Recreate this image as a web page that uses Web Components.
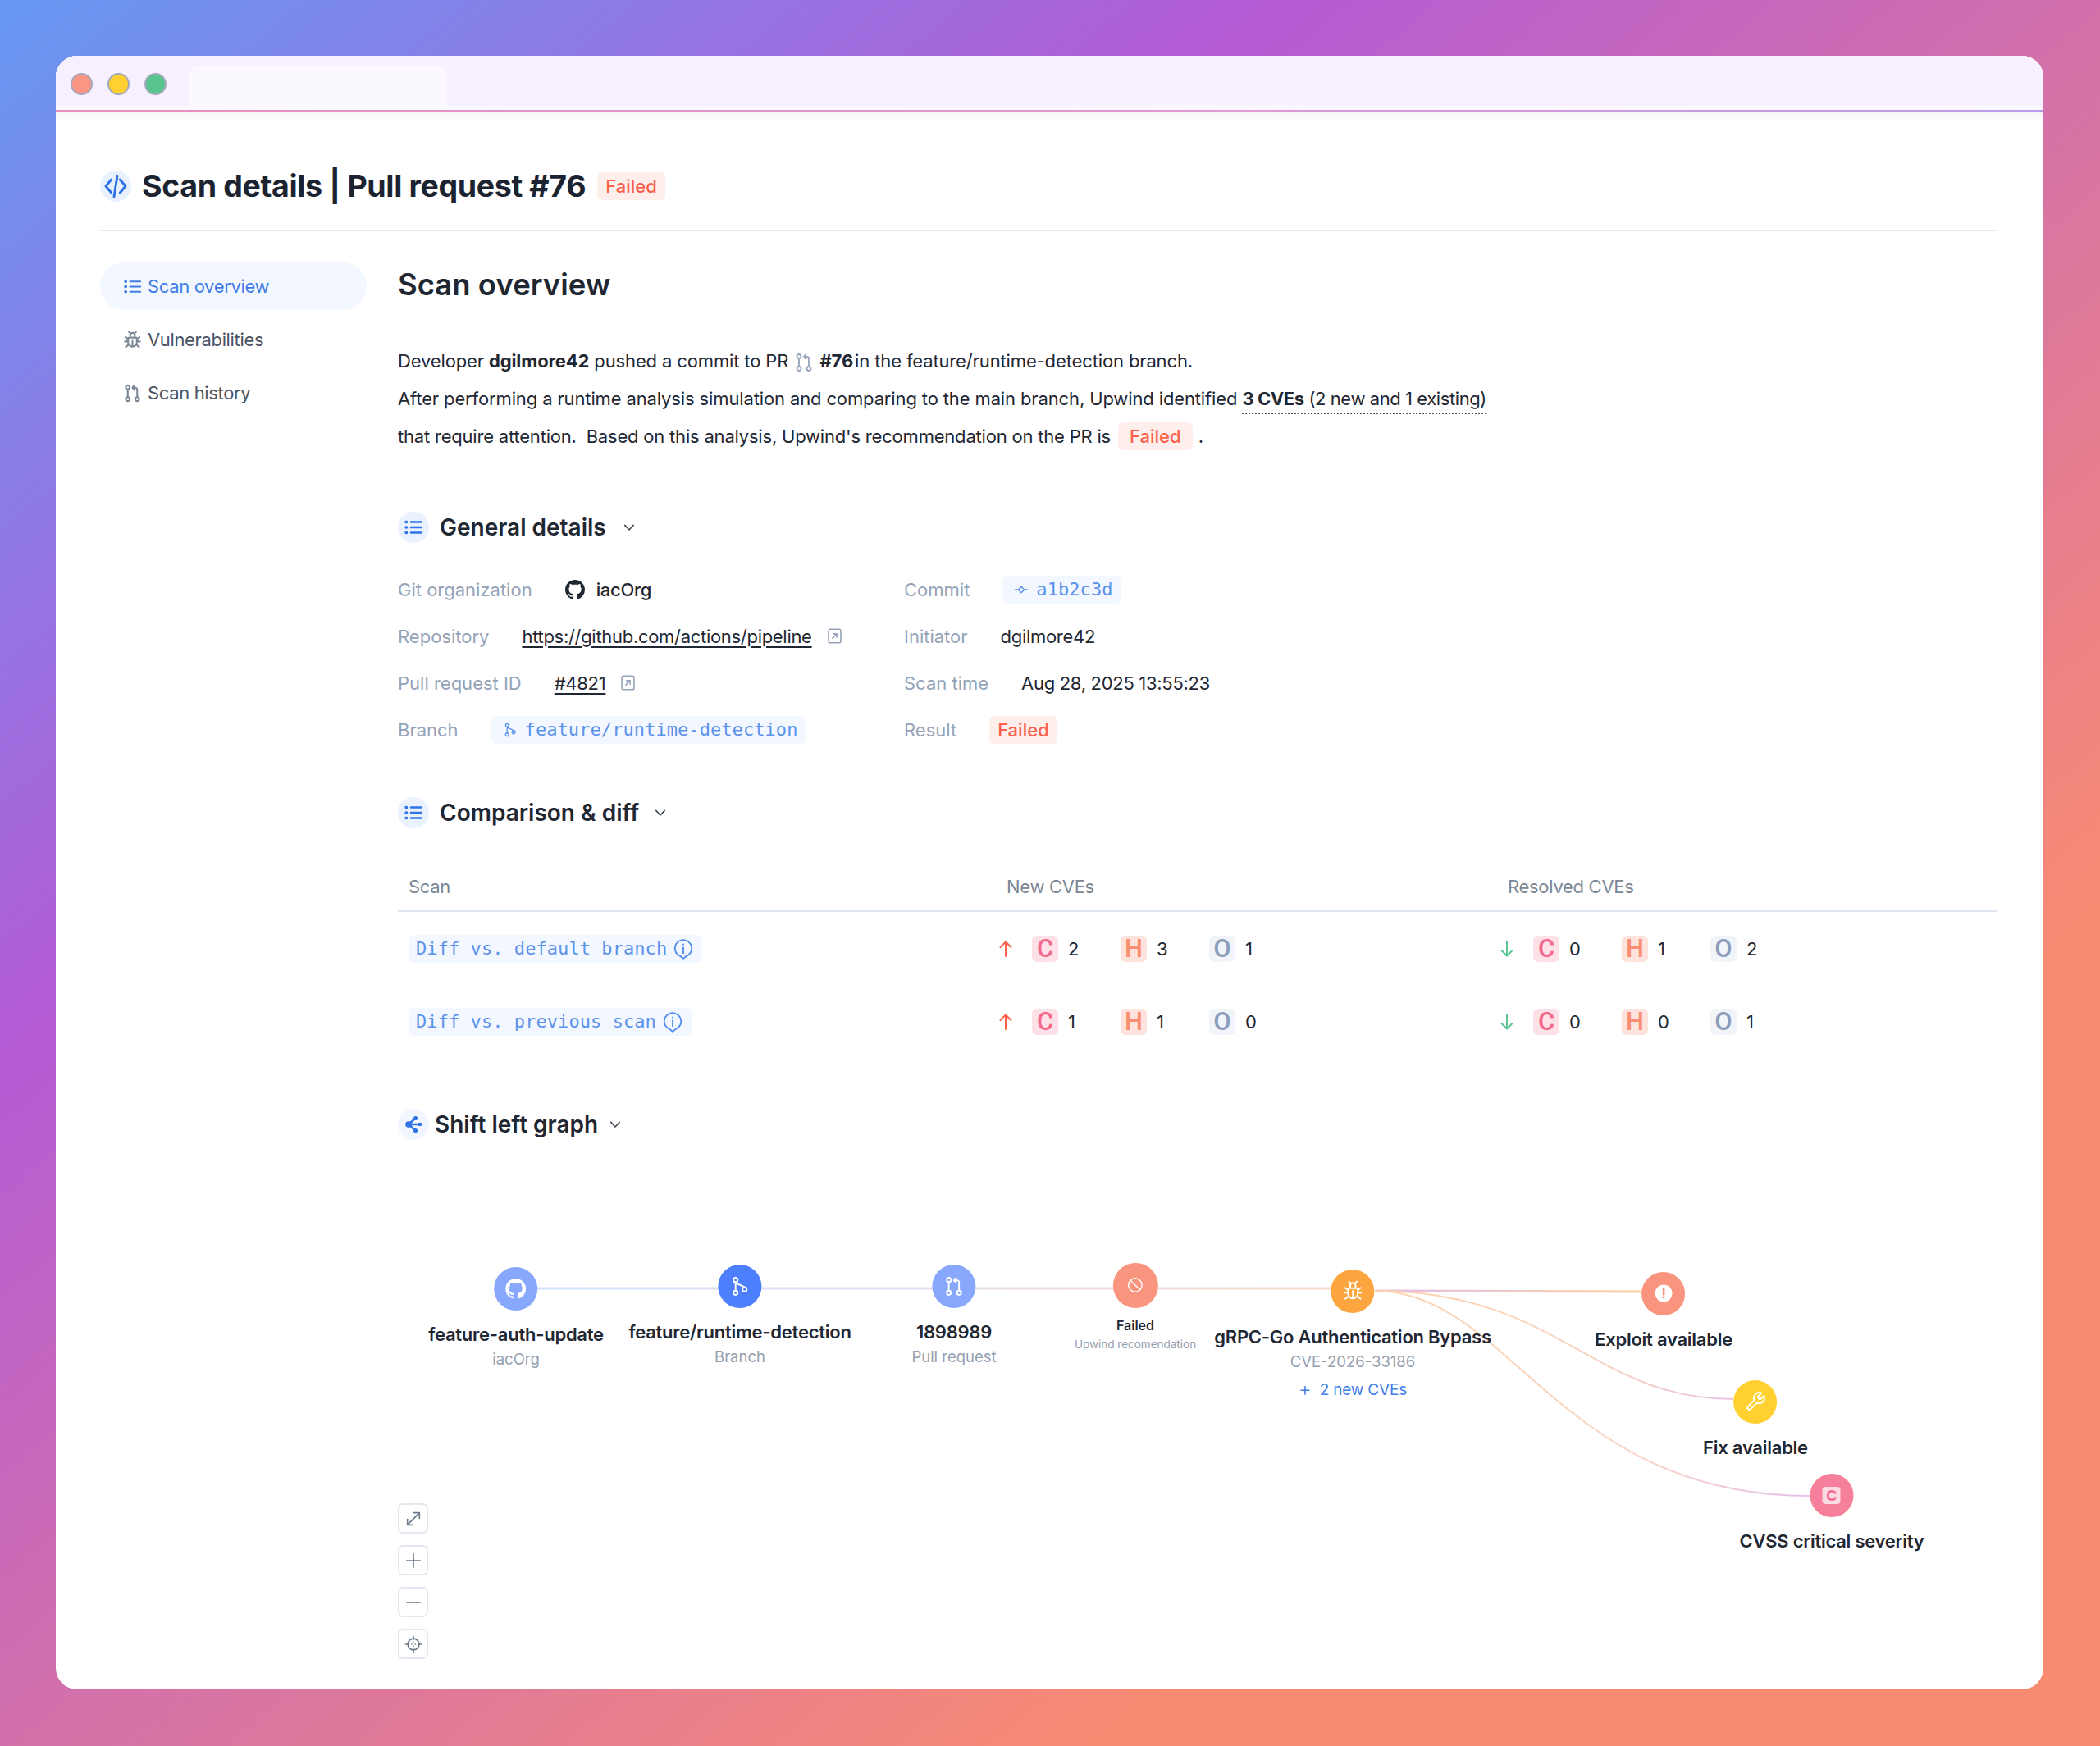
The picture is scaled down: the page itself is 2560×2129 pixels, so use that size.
<!DOCTYPE html>
<html lang="en">
<head>
<meta charset="utf-8">
<title>Scan details</title>
<style>
  html, body { margin: 0; height: 2129px; overflow: hidden; }
  body {
    font-family: Inter, "Liberation Sans", sans-serif;
    font-size: 22px;
    color: #1f2733;
    background: linear-gradient(to bottom right, #6699f2 0%, #b45bd6 30%, #f98b73 76%, #f98b73 100%);
    padding: 68px 69px 69px 68px;
    box-sizing: border-box;
  }
  b { font-weight: 700; }
</style>
</head>
<body>
<browser-window>
  <page-header>Scan details | Pull request #76</page-header>
  <div style="display:flex;gap:38px;padding:38px 57px 0 54px">
    <side-nav>
      <nav-item icon="list" active>Scan overview</nav-item>
      <nav-item icon="bug">Vulnerabilities</nav-item>
      <nav-item icon="pr">Scan history</nav-item>
    </side-nav>
    <main-panel></main-panel>
  </div>
</browser-window>

<script>
// icons, all on a 24 box unless the entry says otherwise
const ICONS = {
  code: '<path d="M8 6 3 12l5 6M16 6l5 6-5 6M13.500 2.500l-3 19"/>',
  list: '<path d="M9 5.500h13M9 12h13M9 18.500h13" /><path d="M3 5.500h.6M3 12h.6M3 18.500h.6" stroke-width="3.400"/>',
  bug: '<path d="M9 7.500V6a3 3 0 0 1 6 0v1.500M8 9h8a1.500 1.500 0 0 1 1.500 1.500V15a5.500 5.500 0 0 1-11 0v-4.500A1.500 1.500 0 0 1 8 9zM12 12v8M6.500 11 3 8.500M17.500 11 21 8.500M6.500 14H2.500M17.500 14h4M7 18l-3.500 3M17 18l3.500 3M9 3 7.500 1.500M15 3l1.500-1.500"/>',
  pr: '<circle cx="6" cy="4.500" r="2.500"/><circle cx="6" cy="19.500" r="2.500"/><circle cx="18" cy="19.500" r="2.500"/><path d="M6 7v10M18 17V7.500A2.500 2.500 0 0 0 15.500 5H12M14.500 2 12 5l2.500 3"/>',
  branch: '<circle cx="7" cy="4.500" r="2.500"/><circle cx="7" cy="19.500" r="2.500"/><circle cx="17.500" cy="15.500" r="2.500"/><path d="M7 7v10M7.500 7c1 4 8 3 9.500 6"/>',
  commit: '<path d="m12 7 5 5-5 5-5-5zM2 12h5M17 12h5"/>',
  ext: '<rect x="3.500" y="2.500" width="17" height="19" rx="2.500"/><path d="M9 15l6-6M10 9h5v5"/>',
  info: '<path d="M12 2a9.500 9.500 0 0 1 3 18.500L12 23l-3-2.500A9.500 9.500 0 0 1 12 2z"/><path d="M12 10.500V17M12 6.800v.4"/>',
  chevron: '<path d="m5 8.500 7 7.500 7-7.500"/>',
  up: '<path d="M12 21V4M5.500 10 12 3.500 18.500 10"/>',
  down: '<path d="M12 3v17M5.500 14l6.500 6.500 6.500-6.500"/>',
  graph: '<circle cx="6" cy="12" r="3.800" fill="currentColor" stroke="none"/><circle cx="14.500" cy="4.500" r="2.600" fill="currentColor" stroke="none"/><circle cx="14.500" cy="19.500" r="2.600" fill="currentColor" stroke="none"/><circle cx="20" cy="12" r="2.300" fill="currentColor" stroke="none"/><path d="M6 12 14.500 4.500M6 12l8.500 7.500M6 12h14"/>',
  ban: '<circle cx="12" cy="12" r="9"/><path d="m5.700 5.700 12.600 12.600"/>',
  wrench: '<path d="M14.700 6.300a1 1 0 0 0 0 1.400l1.600 1.600a1 1 0 0 0 1.400 0l3.770-3.770a6 6 0 0 1-7.940 7.940l-6.910 6.910a2.120 2.120 0 0 1-3-3l6.910-6.910a6 6 0 0 1 7.940-7.940z"/>',
  alert: '<circle cx="12" cy="12" r="10.500" fill="#fff" stroke="none"/><path d="M12 6.500v7M12 16.700v.5" stroke="#f9907f" stroke-width="2.600"/>',
  expand: '<path d="M4 20 20 4M12.500 4H20v7.500M4 12.500V20h7.500"/>',
  plus: '<path d="M12 3v18M3 12h18"/>',
  minus: '<path d="M3 12h18"/>',
  target: '<circle cx="12" cy="12" r="7.500"/><path d="M12 1.500v4M12 18.500v4M1.500 12h4M18.500 12h4"/><path d="M9.500 12h.1M14.500 12h.1M12 9.500v.1M12 14.500v.1"/>',
  github: '<path fill="currentColor" stroke="none" transform="scale(1.500)" d="M8 0C3.580 0 0 3.580 0 8c0 3.540 2.290 6.530 5.470 7.590.4.070.55-.17.55-.38 0-.19-.01-.82-.01-1.490-2.010.37-2.530-.49-2.690-.94-.09-.23-.48-.94-.82-1.130-.28-.15-.68-.52-.01-.53.63-.01 1.080.58 1.230.82.72 1.210 1.870.87 2.330.66.07-.52.28-.87.51-1.070-1.780-.2-3.640-.89-3.640-3.950 0-.87.31-1.590.82-2.150-.08-.2-.36-1.020.08-2.120 0 0 .67-.21 2.200.82.64-.18 1.320-.27 2-.27.68 0 1.360.09 2 .27 1.530-1.040 2.200-.82 2.200-.82.44 1.100.16 1.920.08 2.120.51.56.82 1.270.82 2.150 0 3.070-1.870 3.750-3.650 3.950.29.25.54.73.54 1.480 0 1.070-.01 1.930-.01 2.200 0 .21.15.46.55.38A8.013 8.013 0 0016 8c0-4.420-3.580-8-8-8z"/>'
};

class UiIcon extends HTMLElement {
  connectedCallback() {
    const size = this.getAttribute("size") || 24;
    const sw = this.getAttribute("stroke") || 2;
    this.attachShadow({ mode: "open" }).innerHTML = `
      <style>:host { display: inline-flex; flex: none; line-height: 0; }</style>
      <svg width="${size}" height="${size}" viewBox="0 0 24 24" fill="none" stroke="currentColor"
        stroke-width="${sw}" stroke-linecap="round" stroke-linejoin="round">${ICONS[this.getAttribute("name")]}</svg>`;
  }
}
customElements.define("ui-icon", UiIcon);

class BrowserWindow extends HTMLElement {
  constructor() {
    super();
    this.attachShadow({ mode: "open" }).innerHTML = `
      <style>
        :host { display: block; height: 1992px; background: #fff; border-radius: 26px; overflow: hidden; }
        .chrome { height: 66px; background: #fbf9ff; position: relative; border-bottom: 2px solid; border-image: linear-gradient(90deg, #e58fbc, #dd9ad6 60%, #b79be8) 1; }
        .bar { height: 61px; background: #f6f0ff; display: flex; align-items: center; padding: 8px 0 0 18px; box-sizing: border-box; }
        .dot { width: 27px; height: 27px; border-radius: 50%; box-sizing: border-box; border: 2px solid #a3a8bd; margin-right: 18px; }
        .tab { position: absolute; left: 162px; top: 12px; width: 315px; height: 54px; background: #fbf9ff; border-radius: 14px 14px 0 0; }
        .shade { height: 9px; background: linear-gradient(#f5f5f6, #fafafa); }
      </style>
      <div class="chrome">
        <div class="bar">
          <span class="dot" style="background:#fb9685"></span>
          <span class="dot" style="background:#ffd02f"></span>
          <span class="dot" style="background:#5ac48f"></span>
        </div>
        <div class="tab"></div>
      </div>
      <div class="shade"></div>
      <slot></slot>`;
  }
}
customElements.define("browser-window", BrowserWindow);

class StatusBadge extends HTMLElement {
  constructor() {
    super();
    this.attachShadow({ mode: "open" }).innerHTML = `
      <style>
        :host { display: inline-flex; align-items: center; height: 34px; padding: 0 10px; background: #feefec; color: #f9614d;
          border-radius: 6px; font-size: 22px; font-weight: 500; white-space: nowrap; }
      </style><slot></slot>`;
  }
}
customElements.define("status-badge", StatusBadge);

class PageHeader extends HTMLElement {
  constructor() {
    super();
    this.attachShadow({ mode: "open" }).innerHTML = `
      <style>
        :host { display: flex; align-items: center; height: 38px; margin: 63px 57px 0 54px; padding-bottom: 34px; border-bottom: 2px solid #e4e9f0; }
        .ic { width: 38px; height: 38px; border-radius: 50%; background: #e9f1ff; color: #2f74e6; display: flex; align-items: center; justify-content: center; }
        h1 { margin: 0 14px 0 13px; font-size: 37.500px; font-weight: 700; letter-spacing: -.35px; color: #1b2330; white-space: nowrap; line-height: 44px; }
      </style>
      <span class="ic"><ui-icon name="code" size="32" stroke="2.200"></ui-icon></span>
      <h1><slot></slot></h1>
      <status-badge>Failed</status-badge>`;
  }
}
customElements.define("page-header", PageHeader);

class SideNav extends HTMLElement {
  constructor() {
    super();
    this.attachShadow({ mode: "open" }).innerHTML = `
      <style>:host { display: flex; flex-direction: column; gap: 7px; width: 325px; flex: none; }</style><slot></slot>`;
  }
}
customElements.define("side-nav", SideNav);

class NavItem extends HTMLElement {
  connectedCallback() {
    const active = this.hasAttribute("active");
    this.attachShadow({ mode: "open" }).innerHTML = `
      <style>
        :host { display: flex; align-items: center; gap: 7px; height: 58px; padding-left: 28px; border-radius: 29px;
          background: ${active ? "#f3f7ff" : "transparent"}; color: ${active ? "#3f7de6" : "#4a5464"}; font-size: 22px; letter-spacing: -.35px; }
        ui-icon { color: ${active ? "#3f7de6" : "#7d8897"}; }
      </style>
      <ui-icon name="${this.getAttribute("icon")}" size="23" stroke="2.200"></ui-icon><slot></slot>`;
  }
}
customElements.define("nav-item", NavItem);

class SectionHeading extends HTMLElement {
  connectedCallback() {
    const gap = this.getAttribute("gap") || 13;
    const pale = this.hasAttribute("pale");
    this.attachShadow({ mode: "open" }).innerHTML = `
      <style>
        :host { display: flex; align-items: center; height: 38px; font-size: 28px; font-weight: 600; color: #1f2733; white-space: nowrap; }
        .ic { width: 38px; height: 38px; border-radius: 50%; background: ${pale ? "#f2f6ff" : "#eaf1ff"}; color: #2f74e6;
          display: flex; align-items: center; justify-content: center; margin-right: ${gap}px; }
        ui-icon.chev { color: #3b4452; margin-left: ${this.getAttribute("chev") || 17}px; }
      </style>
      <span class="ic"><ui-icon name="${this.getAttribute("icon")}" size="24" stroke="2.400"></ui-icon></span>
      <slot></slot>
      <ui-icon class="chev" name="chevron" size="18" stroke="2"></ui-icon>`;
  }
}
customElements.define("section-heading", SectionHeading);

class CodePill extends HTMLElement {
  connectedCallback() {
    const icon = this.getAttribute("icon");
    this.attachShadow({ mode: "open" }).innerHTML = `
      <style>
        :host { display: inline-flex; align-items: center; gap: 7px; height: 34px; padding: 0 9px; background: #f3f7ff; color: #5b93ea;
          border-radius: 6px; font-family: "DejaVu Sans Mono", "Liberation Mono", monospace; font-size: 22px; letter-spacing: .07px; white-space: nowrap; }
        ui-icon.lead { margin: 0 2px 0 5px; }
      </style>
      ${icon ? `<ui-icon class="lead" name="${icon}" size="18" stroke="1.800"></ui-icon>` : ""}<slot></slot>`;
  }
}
customElements.define("code-pill", CodePill);

class DetailRow extends HTMLElement {
  constructor() {
    super();
    this.attachShadow({ mode: "open" }).innerHTML = `
      <style>
        :host { display: flex; align-items: center; gap: 40px; height: 57px; font-size: 22px; color: #1f2733; white-space: nowrap; }
        .label { color: #94a3b8; }
        ::slotted(span:not([slot])), ::slotted(ext-link) { letter-spacing: -.3px; }
      </style>
      <span class="label"><slot name="label"></slot></span>
      <slot></slot>`;
  }
}
customElements.define("detail-row", DetailRow);

class ExtLink extends HTMLElement {
  constructor() {
    super();
    this.attachShadow({ mode: "open" }).innerHTML = `
      <style>
        :host { display: inline-flex; align-items: center; gap: 17px; }
        span { text-decoration: underline; text-underline-offset: 4px; }
        ui-icon { color: #94a3b8; }
      </style>
      <span><slot></slot></span><ui-icon name="ext" size="21" stroke="1.800"></ui-icon>`;
  }
}
customElements.define("ext-link", ExtLink);

class SevCounts extends HTMLElement {
  connectedCallback() {
    const up = this.getAttribute("dir") === "up";
    const [c, h, o] = this.getAttribute("counts").split(",");
    const item = (letter, n, bg, fg) => `
      <span class="item"><span class="box" style="background:${bg};color:${fg}">${letter}</span><span>${n}</span></span>`;
    this.attachShadow({ mode: "open" }).innerHTML = `
      <style>
        :host { display: flex; align-items: center; gap: 20px; font-size: 22px; color: #1f2733; margin-left: -13px; }
        ui-icon { color: ${up ? "#f9614d" : "#5ac48f"}; }
        .item { display: flex; align-items: center; gap: 12px; width: 108px; }
        .box { width: 32px; height: 32px; border-radius: 6px; display: flex; align-items: center; justify-content: center;
          font-family: Roboto, Inter, sans-serif; font-size: 31px; font-weight: 500; }
      </style>
      <ui-icon name="${up ? "up" : "down"}" size="24" stroke="2"></ui-icon>
      <span style="display:flex">
        ${item("C", c, "#fde1e6", "#f4688c")}
        ${item("H", h, "#fde3dc", "#fa8e72")}
        ${item("O", o, "#f1f5fa", "#8b9dba")}
      </span>`;
  }
}
customElements.define("sev-counts", SevCounts);

class ScanTable extends HTMLElement {
  constructor() {
    super();
    this.attachShadow({ mode: "open" }).innerHTML = `
      <style>
        :host { display: block; font-size: 22px; }
        .row { display: grid; grid-template-columns: 729px 611px 1fr; padding-left: 13px; align-items: center; }
        .head { height: 59px; color: #7b8794; border-bottom: 2px solid #dfe5ee; letter-spacing: -.3px; }
      </style>
      <div class="row head"><span>Scan</span><span>New CVEs</span><span>Resolved CVEs</span></div>
      <slot></slot>`;
  }
}
customElements.define("scan-table", ScanTable);

class ScanRow extends HTMLElement {
  connectedCallback() {
    this.attachShadow({ mode: "open" }).innerHTML = `
      <style>
        :host { display: grid; grid-template-columns: 729px 611px 1fr; padding-left: 13px; align-items: center; height: 89px; }
        .cell { display: flex; }
        ui-icon { color: #4f8bea; }
      </style>
      <span class="cell"><code-pill>${this.getAttribute("label")}<ui-icon name="info" size="26" stroke="1.700" style="margin:0 1px 0 0"></ui-icon></code-pill></span>
      <sev-counts dir="up" counts="${this.getAttribute("added")}"></sev-counts>
      <sev-counts dir="down" counts="${this.getAttribute("fixed")}"></sev-counts>`;
  }
}
customElements.define("scan-row", ScanRow);

class GraphNode extends HTMLElement {
  connectedCallback() {
    const a = (n) => this.getAttribute(n);
    const size = a("size") || 53;
    const small = this.hasAttribute("small");
    this.attachShadow({ mode: "open" }).innerHTML = `
      <style>
        :host { position: absolute; left: ${a("x")}px; top: ${a("y")}px; transform: translateX(-50%); display: flex; flex-direction: column; align-items: center; text-align: center; white-space: nowrap; }
        .disc { width: ${size}px; height: ${size}px; margin-top: ${-size / 2}px; border-radius: 50%; background: ${a("color")}; color: #fff;
          display: flex; align-items: center; justify-content: center; }
        .title { margin-top: ${a("gap") || 15}px; font-size: ${small ? 16 : 22}px; font-weight: 600; line-height: 28px; color: #1f2733; letter-spacing: ${small ? 0 : "-.25px"}; }
        .sub { font-size: ${small ? 13.5 : 18.5}px; line-height: ${small ? 18 : 32}px; color: #94a0b0; }
        ::slotted(:not([slot])) { margin-top: 4px; }
      </style>
      <span class="disc"><slot name="icon"></slot></span>
      <span class="title">${a("title")}</span>
      ${a("sub") ? `<span class="sub">${a("sub")}</span>` : ""}
      <slot></slot>`;
  }
}
customElements.define("graph-node", GraphNode);

class ShiftGraph extends HTMLElement {
  constructor() {
    super();
    // origin of the canvas is 485,1390 on the page; edges use canvas coordinates
    this.attachShadow({ mode: "open" }).innerHTML = `
      <style>
        :host { display: block; position: relative; height: 650px; }
        svg { position: absolute; left: 0; top: 0; }
        .ctl { position: absolute; left: 0; top: 443px; display: flex; flex-direction: column; gap: 14px; }
        .ctl span { width: 37px; height: 37px; box-sizing: border-box; border: 2px solid #e2e8f0; border-radius: 6px; color: #6d7a8b; display: flex; align-items: center; justify-content: center; }
      </style>
      <svg width="1949" height="650" fill="none" stroke-width="2">
        <defs>
          <linearGradient id="g1" gradientUnits="userSpaceOnUse" x1="144" y1="0" x2="1164" y2="0"><stop offset="0" stop-color="#cfdfff"/><stop offset=".45" stop-color="#e3dcf0"/><stop offset="1" stop-color="#fbdccb"/></linearGradient>
          <linearGradient id="g2" gradientUnits="userSpaceOnUse" x1="1191" y1="0" x2="1515" y2="0"><stop offset="0" stop-color="#e3bcec"/><stop offset="1" stop-color="#fcd09f"/></linearGradient>
          <linearGradient id="g3" gradientUnits="userSpaceOnUse" x1="1191" y1="0" x2="1628" y2="0"><stop offset="0" stop-color="#fcd3ad"/><stop offset=".6" stop-color="#f8d3c0"/><stop offset="1" stop-color="#e9c3e0"/></linearGradient>
          <linearGradient id="g4" gradientUnits="userSpaceOnUse" x1="1191" y1="0" x2="1721" y2="0"><stop offset="0" stop-color="#fcd3ad"/><stop offset=".6" stop-color="#f8d5c4"/><stop offset="1" stop-color="#e5c0ee"/></linearGradient>
        </defs>
        <path stroke="url(#g1)" stroke-width="3" d="M144 181H1164"/>
        <path stroke="url(#g2)" stroke-width="3" d="M1191 184 1515 185"/>
        <path stroke="url(#g3)" d="M1191 184C1415 184 1455 316 1628 316"/>
        <path stroke="url(#g4)" d="M1191 184C1355 184 1415 434 1721 434"/>
      </svg>
      <slot></slot>
      <div class="ctl">
        <span><ui-icon name="expand" size="22" stroke="1.800"></ui-icon></span>
        <span><ui-icon name="plus" size="22" stroke="1.800"></ui-icon></span>
        <span><ui-icon name="minus" size="22" stroke="1.800"></ui-icon></span>
        <span><ui-icon name="target" size="22" stroke="1.800"></ui-icon></span>
      </div>`;
  }
}
customElements.define("shift-graph", ShiftGraph);

class MainPanel extends HTMLElement {
  constructor() {
    super();
    this.attachShadow({ mode: "open" }).innerHTML = `
      <style>
        :host { display: block; flex: 1; min-width: 0; }
        h2 { margin: 5px 0 48px; font-size: 36.500px; font-weight: 600; line-height: 44px; color: #1f2733; }
        p { margin: 0 0 69px; font-size: 22px; line-height: 46px; color: #1f2733; white-space: nowrap; letter-spacing: -.13px; }
        p ui-icon { color: #94a3b8; vertical-align: -6px; margin: 0 1px; }
        p status-badge { padding: 0 14px; margin: 0 1px 0 3px; letter-spacing: 0; }
        .cve { border-bottom: 2px dotted #4a5464; padding-bottom: 4px; letter-spacing: -.42px; }
        .last { letter-spacing: -.2px; }
        .grid { display: grid; grid-template-columns: 617px 1fr; margin: 28px 0 54px; }
        .col { display: flex; flex-direction: column; }
        .org { display: inline-flex; align-items: center; gap: 14px; font-weight: 500; }
        scan-table { margin: 41px 0 62px; }
      </style>
      <h2>Scan overview</h2>
      <p>Developer <b>dgilmore42</b> pushed a commit to PR <ui-icon name="pr" size="24" stroke="1.800"></ui-icon> <b>#76</b><span style="margin-left:2px">in the feature/runtime-detection branch.</span><br>
      After performing a runtime analysis simulation and comparing to the main branch, Upwind identified <span class="cve"><b>3 CVEs</b> (2 new and 1 existing)</span><br>
      <span class="last">that require attention.&nbsp; Based on this analysis, Upwind's recommendation on the PR is </span><status-badge>Failed</status-badge> .</p>

      <section-heading icon="list" chev="19">General details</section-heading>
      <div class="grid">
        <div class="col">
          <detail-row><span slot="label">Git organization</span><span class="org"><ui-icon name="github" size="24"></ui-icon>iacOrg</span></detail-row>
          <detail-row><span slot="label">Repository</span><ext-link>https://github.com/actions/pipeline</ext-link></detail-row>
          <detail-row><span slot="label">Pull request ID</span><ext-link>#4821</ext-link></detail-row>
          <detail-row><span slot="label">Branch</span><code-pill icon="branch">feature/runtime-detection</code-pill></detail-row>
        </div>
        <div class="col">
          <detail-row><span slot="label">Commit</span><code-pill icon="commit">a1b2c3d</code-pill></detail-row>
          <detail-row><span slot="label">Initiator</span><span>dgilmore42</span></detail-row>
          <detail-row><span slot="label">Scan time</span><span>Aug 28, 2025 13:55:23</span></detail-row>
          <detail-row><span slot="label">Result</span><status-badge>Failed</status-badge></detail-row>
        </div>
      </div>

      <section-heading icon="list">Comparison &amp; diff</section-heading>
      <scan-table>
        <scan-row label="Diff vs. default branch" added="2,3,1" fixed="0,1,2"></scan-row>
        <scan-row label="Diff vs. previous scan" added="1,1,0" fixed="0,0,1"></scan-row>
      </scan-table>

      <section-heading icon="graph" gap="7" chev="12" pale>Shift left graph</section-heading>
      <shift-graph>
        <graph-node x="144" y="181" color="#87a8fc" title="feature-auth-update" sub="iacOrg"><ui-icon slot="icon" name="github" size="25"></ui-icon></graph-node>
        <graph-node x="417" y="178" color="#4d7efb" title="feature/runtime-detection" sub="Branch"><ui-icon slot="icon" name="branch" size="25" stroke="1.900"></ui-icon></graph-node>
        <graph-node x="678" y="178" color="#87a8fc" title="1898989" sub="Pull request"><ui-icon slot="icon" name="pr" size="25" stroke="1.900"></ui-icon></graph-node>
        <graph-node x="899" y="177" size="55" gap="7" small color="#f9957f" title="Failed" sub="Upwind recomendation"><ui-icon slot="icon" name="ban" size="22" stroke="1.500"></ui-icon></graph-node>
        <graph-node x="1164" y="184" color="#fda63f" title="gRPC-Go Authentication Bypass" sub="CVE-2026-33186"><ui-icon slot="icon" name="bug" size="26" stroke="1.800"></ui-icon><span style="color:#3f7de6;font-size:19px;line-height:28px;letter-spacing:-.2px"><span style="font-size:24px;font-weight:300;vertical-align:-1px">+</span>&nbsp; 2 new CVEs</span></graph-node>
        <graph-node x="1543" y="187" color="#f9957f" title="Exploit available"><ui-icon slot="icon" name="alert" size="24"></ui-icon></graph-node>
        <graph-node x="1655" y="319" color="#ffd02f" title="Fix available"><ui-icon slot="icon" name="wrench" size="26" stroke="1.800"></ui-icon></graph-node>
        <graph-node x="1748" y="433" color="#f6809c" title="CVSS critical severity"><span slot="icon" style="width:22px;height:21px;border-radius:4px;background:#fcdbe2;color:#f4688c;font-size:18px;font-weight:700;display:flex;align-items:center;justify-content:center">C</span></graph-node>
      </shift-graph>`;
  }
}
customElements.define("main-panel", MainPanel);
</script>
</body>
</html>
